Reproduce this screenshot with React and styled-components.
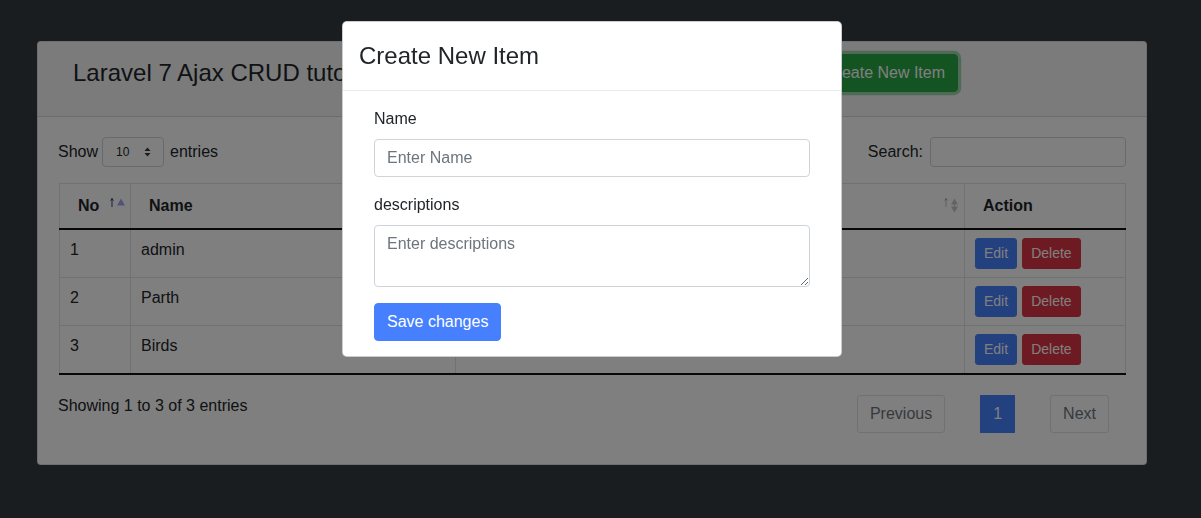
import React from 'react';
import styled, { createGlobalStyle } from 'styled-components';

const GlobalStyle = createGlobalStyle`
  html, body { margin: 0; padding: 0; }
  body {
    background: #343a40;
    font-family: "Liberation Sans", Arial, Helvetica, sans-serif;
    font-size: 16px;
    line-height: 1.5;
    color: #212529;
  }
  *, *::before, *::after { box-sizing: border-box; }
`;

const PRIMARY = '#4680ff';

const Page = styled.div`
  min-height: 518px;
  padding: 41px 0 0 37px;
`;

const Card = styled.div`
  width: 1110px;
  background: #fff;
  border: 1px solid rgba(0, 0, 0, 0.125);
  border-radius: 4px;
`;

const CardHeader = styled.div`
  display: flex;
  align-items: center;
  padding: 12px 20px 24px 35px;
  background: rgba(0, 0, 0, 0.03);
  border-bottom: 1px solid rgba(0, 0, 0, 0.125);
`;

const PageTitle = styled.h4`
  margin: 0;
  flex: 0 0 739px;
  font-size: 24px;
  font-weight: 500;
  line-height: 1.2;
  white-space: nowrap;
  overflow: hidden;
`;

const SuccessButton = styled.button`
  font-family: inherit;
  font-size: 16px;
  line-height: 24px;
  padding: 6px 12px;
  color: #fff;
  background: #28a745;
  border: 1px solid #28a745;
  border-radius: 4px;
  box-shadow: 0 0 0 3.2px rgba(72, 180, 97, 0.5);
`;

const CardBody = styled.div`
  padding: 20px;
`;

const Controls = styled.div`
  display: flex;
  justify-content: space-between;
  align-items: center;
  height: 30px;
`;

const ControlLabel = styled.div`
  display: flex;
  align-items: center;
`;

const FakeSelect = styled.div`
  display: flex;
  align-items: center;
  justify-content: space-between;
  width: 62px;
  height: 30px;
  margin: 0 6px 0 4px;
  padding: 0 12px 0 13px;
  font-size: 12px;
  border: 1px solid #ced4da;
  border-radius: 4px;
  background: #fff;
`;

const SearchInput = styled.input`
  width: 196px;
  height: 30px;
  margin-left: 7px;
  border: 1px solid #ced4da;
  border-radius: 4px;
  background: #fff;
`;

const Table = styled.table`
  width: 1067px;
  margin: 16px 0 0 1px;
  border-collapse: collapse;
`;

const Th = styled.th`
  text-align: left;
  font-weight: 700;
  padding: 10px ${(p) => (p.$sortable ? '4px' : '18px')} 10px 18px;
  border: 1px solid #dee2e6;
  border-bottom: 2px solid #111;
  vertical-align: top;
`;

const ThInner = styled.div`
  display: flex;
  justify-content: space-between;
  align-items: flex-start;
  line-height: 24px;
`;

const Td = styled.td`
  padding: 8px 10px;
  border: 1px solid #dee2e6;
  vertical-align: top;
  line-height: 24px;
`;

const Tr = styled.tr`
  &:last-child td {
    border-bottom: 2px solid #111;
  }
`;

const Actions = styled.div`
  display: flex;
  gap: 5px;
  height: 31px;
`;

const SmallButton = styled.button`
  font-family: inherit;
  font-size: 14px;
  line-height: 21px;
  padding: 4px 8px;
  color: #fff;
  background: ${(p) => (p.$variant === 'danger' ? '#dc3545' : PRIMARY)};
  border: 1px solid ${(p) => (p.$variant === 'danger' ? '#dc3545' : PRIMARY)};
  border-radius: 3px;
`;

const Footer = styled.div`
  display: flex;
  justify-content: space-between;
  align-items: flex-start;
  margin-top: 6px;
`;

const Info = styled.div`
  padding-top: 13px;
`;

const Pagination = styled.div`
  display: flex;
  gap: 35px;
  margin: 14px 17px 11px 0;
`;

const PageLink = styled.span`
  display: block;
  padding: 6px 12px;
  line-height: 24px;
  border: 1px solid ${(p) => (p.$active ? PRIMARY : '#dee2e6')};
  border-radius: ${(p) => (p.$active ? '0' : '3px')};
  background: ${(p) => (p.$active ? PRIMARY : '#fff')};
  color: ${(p) => (p.$active ? '#fff' : '#6c757d')};
`;

const Backdrop = styled.div`
  position: fixed;
  inset: 0;
  background: rgba(0, 0, 0, 0.5);
`;

const ModalLayer = styled.div`
  position: fixed;
  inset: 0;
  padding-right: 17px;
  display: flex;
  justify-content: center;
  align-items: flex-start;
`;

const Dialog = styled.div`
  width: 500px;
  margin-top: 21px;
  background: #fff;
  border: 1px solid rgba(0, 0, 0, 0.2);
  border-radius: 5px;
`;

const ModalHeader = styled.div`
  padding: 16px;
  border-bottom: 1px solid #e9ecef;
`;

const ModalTitle = styled.h4`
  margin: 0;
  font-size: 24px;
  font-weight: 500;
  line-height: 36px;
`;

const ModalBody = styled.div`
  padding: 16px 31px 15px;
`;

const FormGroup = styled.div`
  margin-bottom: 16px;
`;

const Label = styled.label`
  display: block;
  margin-bottom: 8px;
`;

const fieldCss = `
  display: block;
  width: 100%;
  padding: 6px 12px;
  font-family: inherit;
  font-size: 16px;
  line-height: 24px;
  color: #495057;
  background: #fff;
  border: 1px solid #ced4da;
  border-radius: 4px;
  &::placeholder { color: #6c757d; opacity: 1; }
`;

const Input = styled.input`
  ${fieldCss}
  height: 38px;
`;

const TextArea = styled.textarea`
  ${fieldCss}
  height: 62px;
`;

const PrimaryButton = styled.button`
  font-family: inherit;
  font-size: 16px;
  line-height: 24px;
  padding: 6px 12px;
  color: #fff;
  background: ${PRIMARY};
  border: 1px solid ${PRIMARY};
  border-radius: 4px;
`;

const SortSvg = styled.svg`
  flex: none;
  margin-top: 3px;
`;

function SortIcon({ active }) {
  return (
    <SortSvg width="16" height="17" viewBox="0 0 16 17">
      <g opacity={active ? 1 : 0.3}>
        <path d="M2 10V1.5M0.6 3.6L2 1.5L3.4 3.6" stroke={active ? '#2c3a7a' : '#222'} strokeWidth="1" fill="none" />
      </g>
      {active ? (
        <path d="M7 8.5L11 1.5L15 8.5Z" fill="#a4a4f4" />
      ) : (
        <g opacity="0.25" fill="#222">
          <path d="M7 7.5L10.5 1.5L14 7.5Z" />
          <path d="M7 9.5L10.5 15.5L14 9.5Z" />
          <path d="M10.5 3V14M9 12L10.5 14.5L12 12" stroke="#222" fill="none" />
        </g>
      )}
    </SortSvg>
  );
}

function SelectCaret() {
  return (
    <svg width="7" height="10" viewBox="0 0 7 10">
      <path d="M0.5 4L3.5 0.5L6.5 4Z M0.5 6L3.5 9.5L6.5 6Z" fill="#343a40" />
    </svg>
  );
}

const rows = [
  { no: 1, name: 'admin', desc: 'admin' },
  { no: 2, name: 'Parth', desc: 'Parth' },
  { no: 3, name: 'Birds', desc: 'Birds' },
];

export default function App() {
  return (
    <>
      <GlobalStyle />
      <Page>
        <Card>
          <CardHeader>
            <PageTitle>Laravel 7 Ajax CRUD tutorial using Datatable</PageTitle>
            <SuccessButton>Create New Item</SuccessButton>
          </CardHeader>
          <CardBody>
            <Controls>
              <ControlLabel>
                Show
                <FakeSelect>
                  <span>10</span>
                  <SelectCaret />
                </FakeSelect>
                entries
              </ControlLabel>
              <ControlLabel>
                Search:
                <SearchInput type="search" />
              </ControlLabel>
            </Controls>
            <Table>
              <colgroup>
                <col style={{ width: 71 }} />
                <col style={{ width: 325 }} />
                <col style={{ width: 509 }} />
                <col />
              </colgroup>
              <thead>
                <tr>
                  <Th $sortable>
                    <ThInner>
                      <span>No</span>
                      <SortIcon active />
                    </ThInner>
                  </Th>
                  <Th $sortable>
                    <ThInner>
                      <span>Name</span>
                      <SortIcon />
                    </ThInner>
                  </Th>
                  <Th $sortable>
                    <ThInner>
                      <span>Description</span>
                      <SortIcon />
                    </ThInner>
                  </Th>
                  <Th>
                    <ThInner>
                      <span>Action</span>
                    </ThInner>
                  </Th>
                </tr>
              </thead>
              <tbody>
                {rows.map((r) => (
                  <Tr key={r.no}>
                    <Td>{r.no}</Td>
                    <Td>{r.name}</Td>
                    <Td>{r.desc}</Td>
                    <Td>
                      <Actions>
                        <SmallButton>Edit</SmallButton>
                        <SmallButton $variant="danger">Delete</SmallButton>
                      </Actions>
                    </Td>
                  </Tr>
                ))}
              </tbody>
            </Table>
            <Footer>
              <Info>Showing 1 to 3 of 3 entries</Info>
              <Pagination>
                <PageLink>Previous</PageLink>
                <PageLink $active>1</PageLink>
                <PageLink>Next</PageLink>
              </Pagination>
            </Footer>
          </CardBody>
        </Card>
      </Page>
      <Backdrop />
      <ModalLayer>
        <Dialog>
          <ModalHeader>
            <ModalTitle>Create New Item</ModalTitle>
          </ModalHeader>
          <ModalBody>
            <FormGroup>
              <Label>Name</Label>
              <Input placeholder="Enter Name" />
            </FormGroup>
            <FormGroup>
              <Label>descriptions</Label>
              <TextArea placeholder="Enter descriptions" />
            </FormGroup>
            <PrimaryButton>Save changes</PrimaryButton>
          </ModalBody>
        </Dialog>
      </ModalLayer>
    </>
  );
}
